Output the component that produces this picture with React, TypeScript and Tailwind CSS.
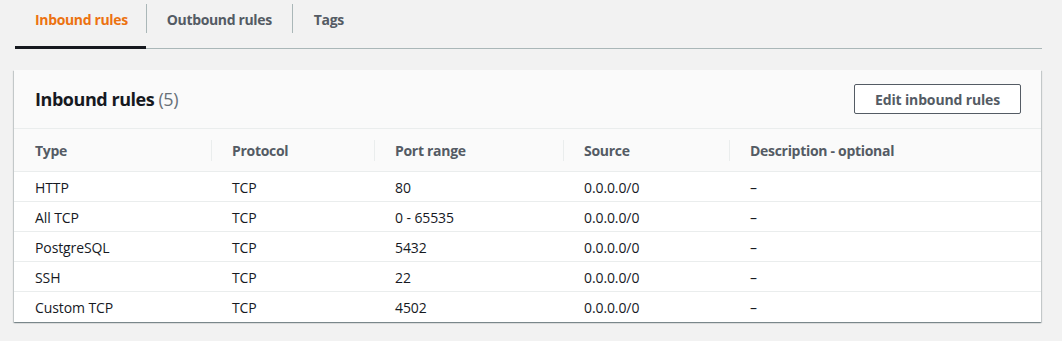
import React from "react";

const rows = [
  ["HTTP", "TCP", "80", "0.0.0.0/0", "–"],
  ["All TCP", "TCP", "0 - 65535", "0.0.0.0/0", "–"],
  ["PostgreSQL", "TCP", "5432", "0.0.0.0/0", "–"],
  ["SSH", "TCP", "22", "0.0.0.0/0", "–"],
  ["Custom TCP", "TCP", "4502", "0.0.0.0/0", "–"],
];

const cols = ["Type", "Protocol", "Port range", "Source", "Description - optional"];

export default function App() {
  return (
    <div
      className="w-[1062px] h-[341px] bg-[#f2f2f2] overflow-hidden"
      style={{ fontFamily: '"Open Sans", "Noto Sans", sans-serif' }}
    >
      <div className="ml-[15px] mr-[20px] flex h-[49px] border-b border-[#aab7b8]">
        <div className="relative flex items-start">
          <div className="pl-[20px] pr-[18px] pt-[9px] text-[14px] font-bold tracking-[-0.35px] text-[#ec7211] leading-[22px]">Inbound rules</div>
          <div className="absolute left-0 right-0 bottom-[-1px] h-[3px] bg-[#16191f]" />
        </div>
        <div className="w-px h-[29px] mt-[4px] bg-[#aab7b8]" />
        <div className="px-[20px] pt-[9px] text-[14px] font-bold tracking-[-0.35px] text-[#545b64] leading-[22px]">Outbound rules</div>
        <div className="w-px h-[29px] mt-[4px] bg-[#aab7b8]" />
        <div className="px-[21px] pt-[9px] text-[14px] font-bold tracking-[-0.35px] text-[#545b64] leading-[22px]">Tags</div>
      </div>

      <div
        className="ml-[14px] mt-[21px] w-[1027px] bg-white"
        style={{
          boxShadow:
            "0 1px 1px 0 rgba(0,28,36,0.3), 1px 1px 1px 0 rgba(0,28,36,0.15), -1px 1px 1px 0 rgba(0,28,36,0.15)",
        }}
      >
        <div className="h-[59px] bg-[#fafafa] border-b border-[#eaeded] flex items-center justify-between pl-[21px] pr-[20px]">
          <div className="text-[18px] leading-[22px] font-bold tracking-[-0.45px] text-[#16191f]">
            Inbound rules <span className="font-normal text-[#687078]">(5)</span>
          </div>
          <button className="h-[30px] px-[20px] border border-[#545b64] rounded-[2px] bg-white text-[14px] font-bold tracking-[-0.15px] text-[#545b64]">
            Edit inbound rules
          </button>
        </div>

        <div className="grid grid-cols-[197px_163px_189px_166px_1fr] h-[43px] bg-[#fafafa] border-b border-[#eaeded]">
          {cols.map((c, i) => (
            <div key={c} className="flex items-center">
              {i > 0 && <div className="w-px h-[21px] bg-[#eaeded]" />}
              <span className={`${i === 0 ? "ml-[21px]" : "ml-[20px]"} text-[14px] font-bold tracking-[-0.3px] text-[#545b64]`}>{c}</span>
            </div>
          ))}
        </div>

        {rows.map((r, ri) => (
          <div
            key={ri}
            className={`grid grid-cols-[197px_163px_189px_166px_1fr] h-[30px] ${ri < rows.length - 1 ? "border-b border-[#eaeded]" : ""}`}
          >
            {r.map((v, i) => (
              <div key={i} className="flex items-center pl-[21px] pt-[1px] text-[14px] tracking-[-0.1px] text-[#16191f]">
                {v}
              </div>
            ))}
          </div>
        ))}
      </div>
    </div>
  );
}
